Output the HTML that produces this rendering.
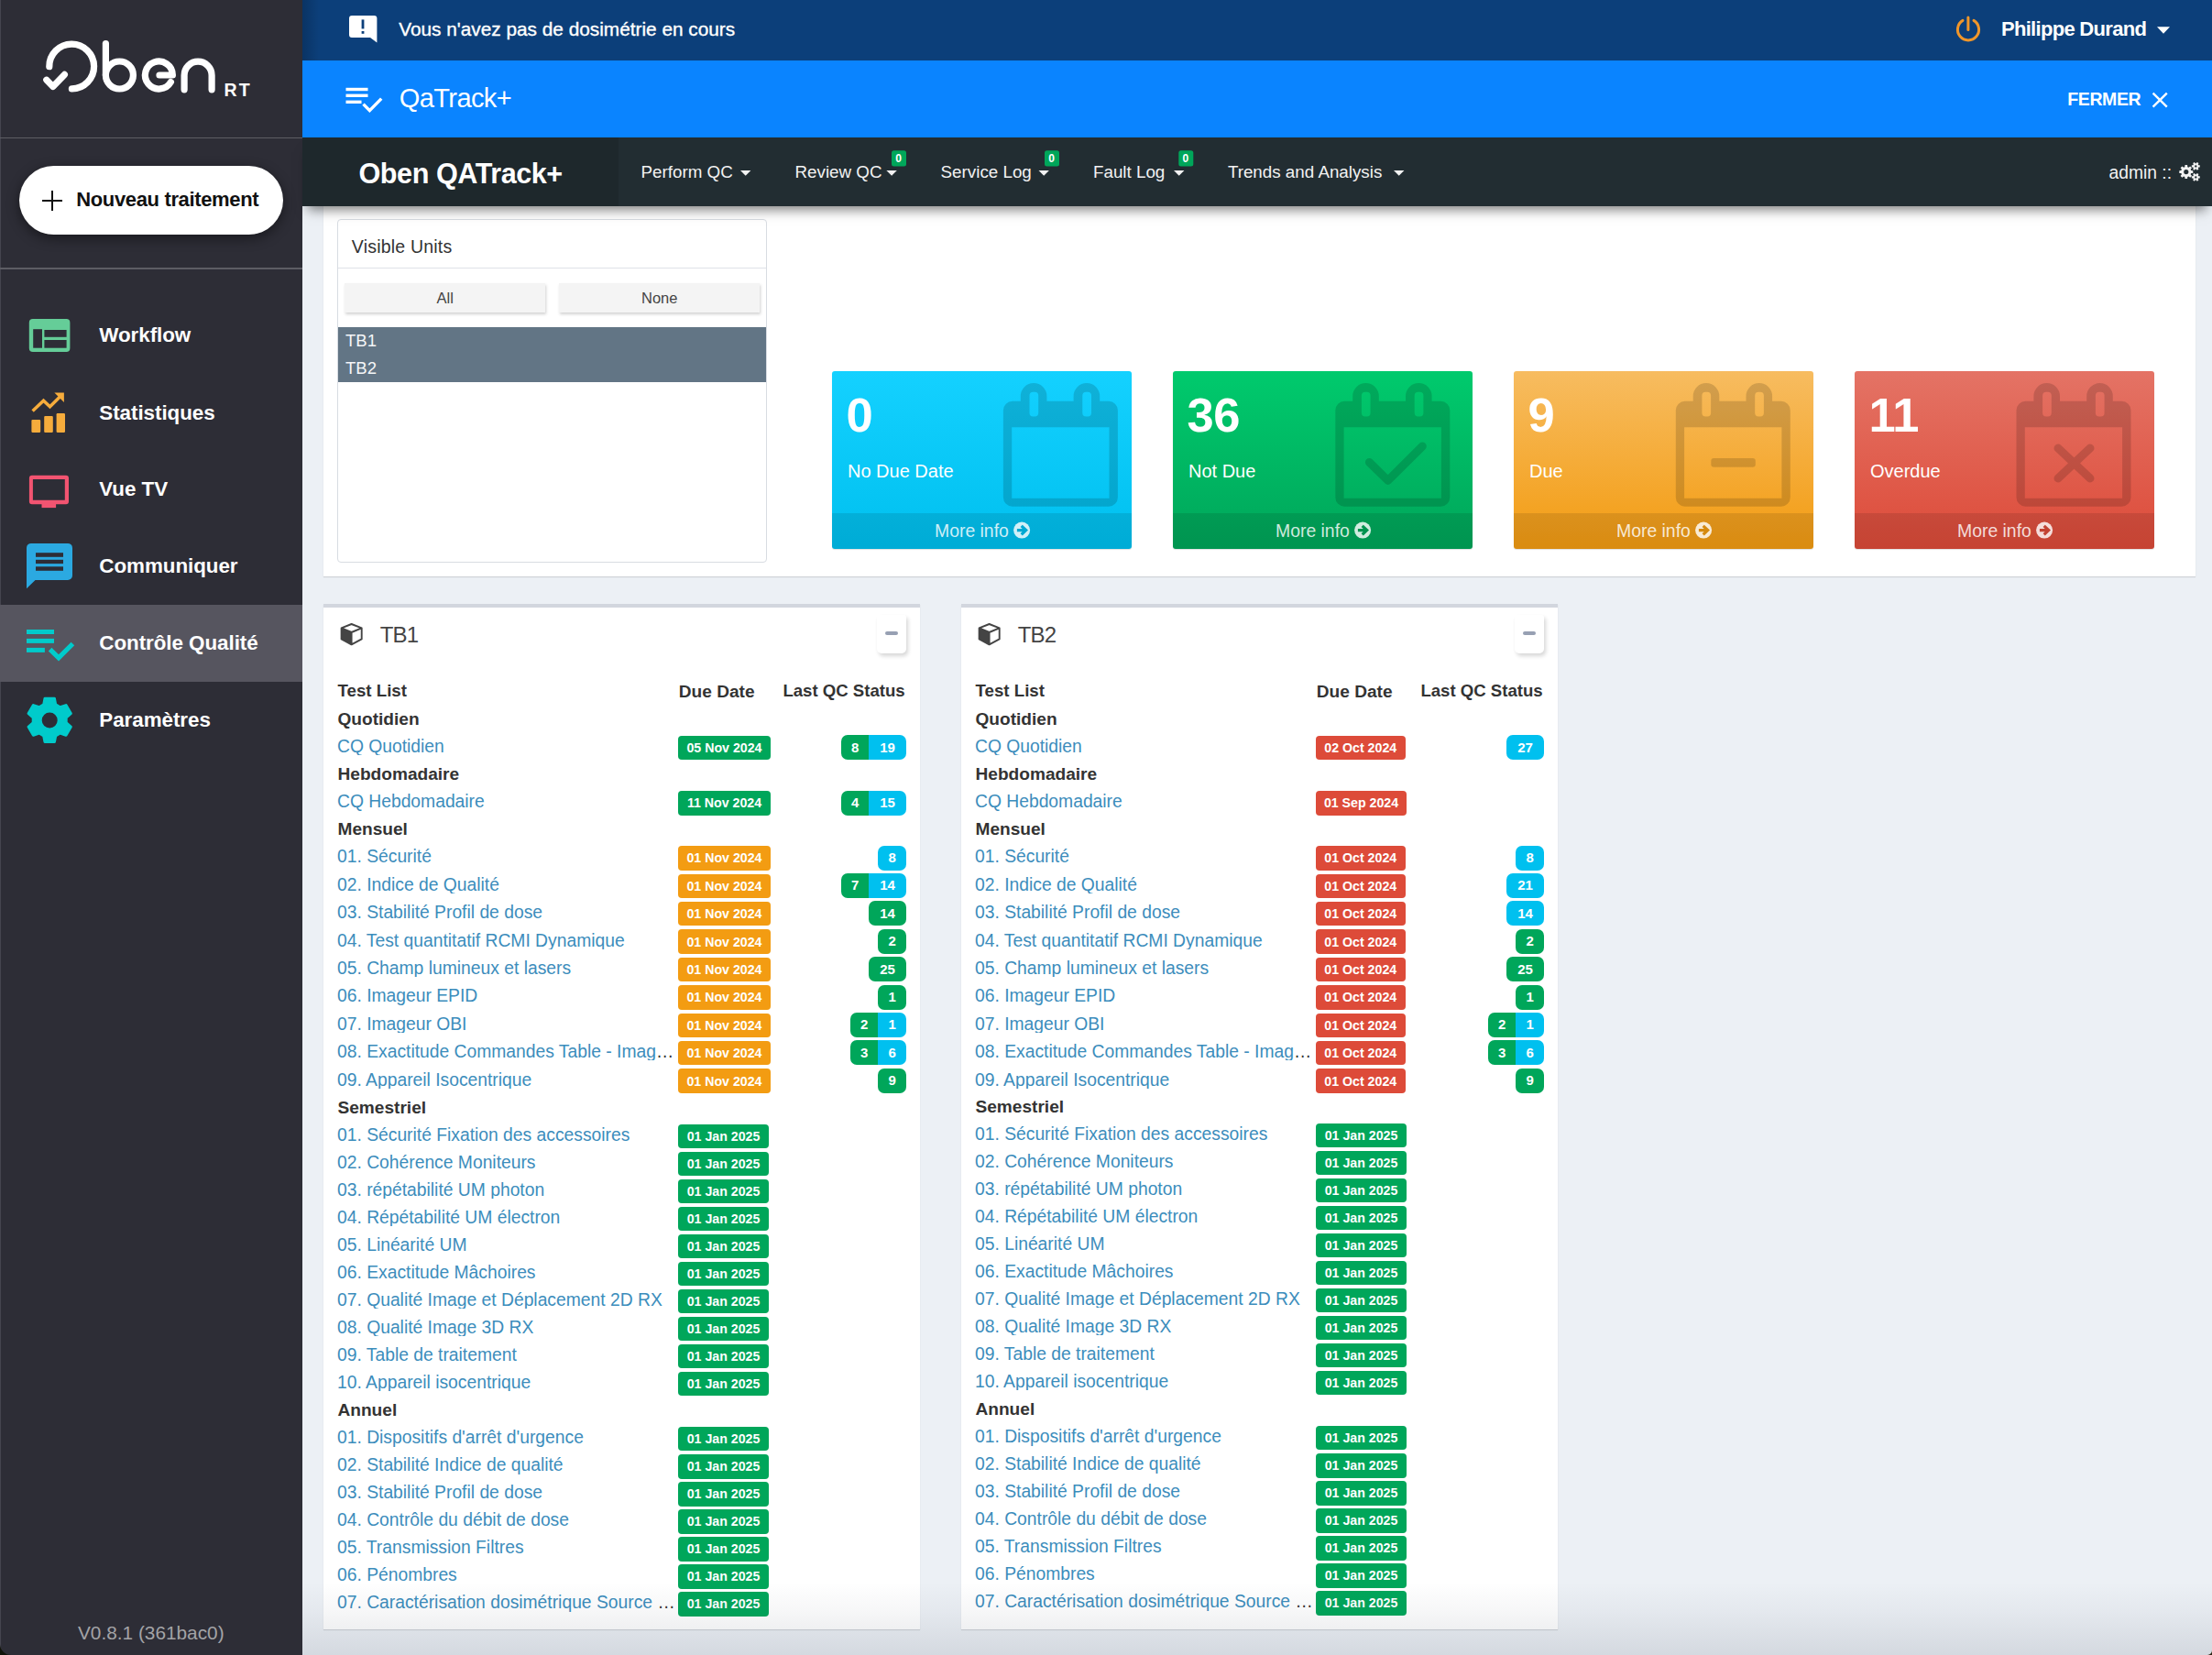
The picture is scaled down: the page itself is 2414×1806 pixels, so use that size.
<!DOCTYPE html><html><head><meta charset="utf-8"><title>Oben QATrack+</title><style>
*{box-sizing:border-box;margin:0;padding:0}
html,body{width:2414px;height:1806px;overflow:hidden}
body{position:relative;background:#ecf0f5;font-family:"Liberation Sans",sans-serif;}
.t{position:absolute;white-space:nowrap;}
.r{position:absolute;}
svg{position:absolute;overflow:visible}
</style></head><body><div class="r" style="left:0.00px;top:0.00px;width:330.00px;height:1806.00px;background:#2d2d36;"></div>
<div class="r" style="left:0.00px;top:0.00px;width:1.00px;height:1806.00px;background:#45454f;"></div>
<svg style="left:0;top:0" width="330" height="140" viewBox="0 0 330 140">
<g fill="none" stroke="#fff" stroke-width="7.2" stroke-linecap="round" stroke-linejoin="round">
<path d="M53.8 72.7 A24.4 24.4 0 1 1 78.4 96.9"/>
<path d="M50.8 87.2 L57.8 94.4 L70.4 81.4"/>
<path d="M115.4 47.6 V82"/>
<circle cx="130.4" cy="82" r="15"/>
<path d="M174 82 H188.4 A15 15 0 1 0 186.4 89.5"/>
<path d="M201.1 97.8 V82.2 A15 15 0 0 1 231.1 82.2 V97.8"/>
</g></svg>
<div class="t" style="left:244.50px;top:89.49px;font-size:19.5px;line-height:19.5px;font-weight:700;color:#fff;letter-spacing:2.2px;">RT</div>
<div class="r" style="left:0.00px;top:150.00px;width:330.00px;height:1.00px;background:#5d5d64;"></div>
<div class="r" style="left:0.00px;top:292.00px;width:330.00px;height:1.50px;background:#5d5d64;"></div>
<div class="r" style="left:20.50px;top:181.00px;width:288.50px;height:75.00px;background:#fff;border-radius:38px;box-shadow:0 4px 14px rgba(0,0,0,0.45);"></div>
<div class="r" style="left:46.00px;top:217.80px;width:22.00px;height:2.60px;background:#111;"></div>
<div class="r" style="left:55.70px;top:208.00px;width:2.60px;height:22.00px;background:#111;"></div>
<div class="t" style="left:83.20px;top:207.28px;font-size:22px;line-height:22px;font-weight:700;color:#111;letter-spacing:-0.35px;">Nouveau traitement</div>
<div class="r" style="left:0.00px;top:660.00px;width:330.00px;height:84.00px;background:#56555f;"></div>
<div class="t" style="left:108.30px;top:354.84px;font-size:22.4px;line-height:22.4px;font-weight:700;color:#fff;letter-spacing:-0.05px;">Workflow</div>
<div class="t" style="left:108.30px;top:439.54px;font-size:22.4px;line-height:22.4px;font-weight:700;color:#fff;letter-spacing:-0.05px;">Statistiques</div>
<div class="t" style="left:108.30px;top:522.64px;font-size:22.4px;line-height:22.4px;font-weight:700;color:#fff;letter-spacing:-0.05px;">Vue TV</div>
<div class="t" style="left:108.30px;top:607.34px;font-size:22.4px;line-height:22.4px;font-weight:700;color:#fff;letter-spacing:-0.05px;">Communiquer</div>
<div class="t" style="left:108.30px;top:690.74px;font-size:22.4px;line-height:22.4px;font-weight:700;color:#fff;letter-spacing:-0.05px;">Contrôle Qualité</div>
<div class="t" style="left:108.30px;top:775.44px;font-size:22.4px;line-height:22.4px;font-weight:700;color:#fff;letter-spacing:-0.05px;">Paramètres</div>
<svg style="left:0;top:0" width="100" height="820">
<rect x="31.8" y="348" width="44.6" height="36" rx="4" fill="#65cd98"/>
<rect x="36.2" y="359.2" width="9.8" height="20.5" fill="#2d2d36"/>
<rect x="48.4" y="360" width="24.2" height="7.8" fill="#2d2d36"/>
<rect x="48.4" y="371" width="24.2" height="8.7" fill="#2d2d36"/>
<g fill="#f6ac3c">
<rect x="34.4" y="457.9" width="9.8" height="14.1" rx="1.2"/>
<rect x="48.2" y="453.9" width="9.6" height="18.1" rx="1.2"/>
<rect x="61.6" y="451" width="9.4" height="21" rx="1.2"/>
</g>
<path d="M35.6 448.6 L47.5 437.2 L54.5 443.8 L65.4 433" fill="none" stroke="#f6ac3c" stroke-width="3.4" stroke-linejoin="miter"/>
<path d="M59.4 428.5 L69.9 428.5 L69.9 439 Z" fill="#f6ac3c"/>
<path d="M34.9 518.8 H72 A3 3 0 0 1 75 521.8 V547.3 A3 3 0 0 1 72 550.3 H34.9 A3 3 0 0 1 31.9 547.3 V521.8 A3 3 0 0 1 34.9 518.8 Z M35.9 523.1 V545.8 H70.8 V523.1 Z" fill="#f25471" fill-rule="evenodd"/>
<rect x="45.5" y="550" width="15.6" height="4.1" fill="#f25471"/>
<path d="M34 592.9 H74 A5 5 0 0 1 79 597.9 V628 A5 5 0 0 1 74 633 H38.5 L29 642.3 V597.9 A5 5 0 0 1 34 592.9 Z" fill="#2ba9e1"/>
<rect x="39" y="603.2" width="30" height="4.6" fill="#2d2d36"/>
<rect x="39" y="610.8" width="30" height="4.3" fill="#2d2d36"/>
<rect x="39" y="618.3" width="30" height="4.5" fill="#2d2d36"/>
<g fill="#00cbcb">
<rect x="29" y="687" width="30" height="5"/>
<rect x="29" y="696.9" width="30" height="5"/>
<rect x="29" y="706.9" width="19.9" height="5"/>
</g>
<path d="M54.6 708.6 L64 717.9 L79.4 702.5" fill="none" stroke="#00cbcb" stroke-width="5.2"/>
</svg>
<svg style="left:0;top:0" width="100" height="830"><path d="M47.68 768.91 L48.96 762.27 L59.44 762.27 L60.72 768.91 L65.65 771.76 L72.04 769.55 L77.28 778.62 L72.18 783.05 L72.18 788.75 L77.28 793.18 L72.04 802.25 L65.65 800.04 L60.72 802.89 L59.44 809.53 L48.96 809.53 L47.68 802.89 L42.75 800.04 L36.36 802.25 L31.12 793.18 L36.22 788.75 L36.22 783.05 L31.12 778.62 L36.36 769.55 L42.75 771.76 Z M64.20 785.90 A10 10 0 1 0 44.20 785.90 A10 10 0 1 0 64.20 785.90 Z" fill="#00cbcb" fill-rule="evenodd" stroke="#00cbcb" stroke-width="3" stroke-linejoin="round"/></svg>
<div class="t" style="left:85.00px;top:1771.89px;font-size:20.8px;line-height:20.8px;color:#a3a3a6;">V0.8.1 (361bac0)</div>
<div class="r" style="left:330.00px;top:0.00px;width:2084.00px;height:66.00px;background:#0c3f7a;"></div>
<div class="r" style="left:330.00px;top:0.00px;width:18.00px;height:66.00px;background:linear-gradient(90deg,rgba(0,0,0,0.18),rgba(0,0,0,0));"></div>
<svg style="left:0;top:0" width="420" height="60">
<path d="M384 17 H408.4 A3 3 0 0 1 411.4 20 V46.6 L404 41 H384 A3 3 0 0 1 381 38 V20 A3 3 0 0 1 384 17 Z" fill="#fff"/>
<rect x="394.6" y="21.4" width="2.8" height="10" fill="#0c3f7a"/>
<rect x="394.6" y="34" width="2.8" height="2.8" fill="#0c3f7a"/>
</svg>
<div class="t" style="left:435.20px;top:21.69px;font-size:20.8px;line-height:20.8px;color:#fff;letter-spacing:0px;-webkit-text-stroke:0.35px #fff;">Vous n'avez pas de dosimétrie en cours</div>
<svg style="left:0;top:0" width="2414" height="60">
<path d="M2142 22.4 A11.6 11.6 0 1 0 2154 22.4" fill="none" stroke="#f0962a" stroke-width="3" stroke-linecap="round"/>
<path d="M2147.9 19 V32.6" fill="none" stroke="#f0962a" stroke-width="3" stroke-linecap="round"/>
<path d="M2354 29.2 H2368 L2361 36.8 Z" fill="#fff"/>
</svg>
<div class="t" style="left:2184.00px;top:21.48px;font-size:22px;line-height:22px;font-weight:700;color:#fff;letter-spacing:-0.7px;">Philippe Durand</div>
<div class="r" style="left:330.00px;top:66.00px;width:2084.00px;height:84.00px;background:#0a84ff;"></div>
<svg style="left:0;top:0" width="2414" height="150">
<g fill="#fff">
<rect x="377.5" y="95.8" width="24" height="3.4"/>
<rect x="377.5" y="102.6" width="24" height="3.4"/>
<rect x="377.5" y="109.6" width="17" height="3.4"/>
</g>
<path d="M396.5 113.6 L403.4 120.6 L416.2 107.6" fill="none" stroke="#fff" stroke-width="3.4"/>
<path d="M2349.6 101.6 L2364.8 116.6 M2364.8 101.6 L2349.6 116.6" stroke="#fff" stroke-width="2.4"/>
</svg>
<div class="t" style="left:435.80px;top:93.45px;font-size:29px;line-height:29px;color:#fff;letter-spacing:-0.6px;">QaTrack+</div>
<div class="t" style="left:2256.30px;top:99.19px;font-size:19.5px;line-height:19.5px;font-weight:700;color:#fff;letter-spacing:-0.4px;">FERMER</div>
<div class="r" style="left:330.00px;top:150.00px;width:2084.00px;height:75.00px;background:#222d32;box-shadow:0 10px 12px -6px rgba(0,0,0,0.5);z-index:5"></div>
<div class="r" style="left:330.00px;top:150.00px;width:345.00px;height:75.00px;background:#1e282c;z-index:5"></div>
<div style="position:absolute;left:0;top:0;z-index:6">
<div class="t" style="left:391.50px;top:173.60px;font-size:30.6px;line-height:30.6px;font-weight:700;color:#fff;letter-spacing:-0.45px;">Oben QATrack+</div>
<div class="t" style="left:699.60px;top:179.29px;font-size:18.8px;line-height:18.8px;color:#f2f2f2;">Perform QC</div>
<div class="t" style="left:867.50px;top:179.29px;font-size:18.8px;line-height:18.8px;color:#f2f2f2;">Review QC</div>
<div class="t" style="left:1026.60px;top:179.29px;font-size:18.8px;line-height:18.8px;color:#f2f2f2;">Service Log</div>
<div class="t" style="left:1193.00px;top:179.29px;font-size:18.8px;line-height:18.8px;color:#f2f2f2;">Fault Log</div>
<div class="t" style="left:1339.90px;top:179.29px;font-size:18.8px;line-height:18.8px;color:#f2f2f2;">Trends and Analysis</div>
<svg style="left:0;top:0" width="2414" height="230"><path d="M808 186 H819.4 L813.7 191.8 Z" fill="#f2f2f2"/><path d="M967.4 186 H978.8 L973.1 191.8 Z" fill="#f2f2f2"/><rect x="973" y="164.2" width="16" height="17.4" rx="2.5" fill="#00a65a"/><path d="M1133.5 186 H1144.9 L1139.2 191.8 Z" fill="#f2f2f2"/><rect x="1140" y="164.2" width="16" height="17.4" rx="2.5" fill="#00a65a"/><path d="M1281 186 H1292.4 L1286.7 191.8 Z" fill="#f2f2f2"/><rect x="1286.3" y="164.2" width="16" height="17.4" rx="2.5" fill="#00a65a"/><path d="M1521 186 H1532.4 L1526.7 191.8 Z" fill="#f2f2f2"/></svg>
<div class="t" style="left:977.20px;top:167.44px;font-size:12px;line-height:12px;font-weight:700;color:#fff;">0</div>
<div class="t" style="left:1144.20px;top:167.44px;font-size:12px;line-height:12px;font-weight:700;color:#fff;">0</div>
<div class="t" style="left:1290.50px;top:167.44px;font-size:12px;line-height:12px;font-weight:700;color:#fff;">0</div>
<div class="t" style="left:2301.50px;top:178.66px;font-size:19.3px;line-height:19.3px;color:#f2f2f2;">admin ::</div>
<svg style="left:0;top:0" width="2414" height="230"><path d="M2391.20 186.12 L2393.29 186.29 L2393.29 188.91 L2391.20 189.08 L2390.66 190.37 L2392.02 191.97 L2390.17 193.82 L2388.57 192.46 L2387.28 193.00 L2387.11 195.09 L2384.49 195.09 L2384.32 193.00 L2383.03 192.46 L2381.43 193.82 L2379.58 191.97 L2380.94 190.37 L2380.40 189.08 L2378.31 188.91 L2378.31 186.29 L2380.40 186.12 L2380.94 184.83 L2379.58 183.23 L2381.43 181.38 L2383.03 182.74 L2384.32 182.20 L2384.49 180.11 L2387.11 180.11 L2387.28 182.20 L2388.57 182.74 L2390.17 181.38 L2392.02 183.23 L2390.66 184.83 Z M2388.40 187.60 A2.6 2.6 0 1 0 2383.20 187.60 A2.6 2.6 0 1 0 2388.40 187.60 Z" fill="#f2f2f2" fill-rule="evenodd"/><path d="M2399.30 180.28 L2400.78 180.35 L2400.78 182.45 L2399.30 182.52 L2398.77 183.44 L2399.45 184.75 L2397.63 185.80 L2396.83 184.56 L2395.77 184.56 L2394.97 185.80 L2393.15 184.75 L2393.83 183.44 L2393.30 182.52 L2391.82 182.45 L2391.82 180.35 L2393.30 180.28 L2393.83 179.36 L2393.15 178.05 L2394.97 177.00 L2395.77 178.24 L2396.83 178.24 L2397.63 177.00 L2399.45 178.05 L2398.77 179.36 Z M2397.50 181.40 A1.2 1.2 0 1 0 2395.10 181.40 A1.2 1.2 0 1 0 2397.50 181.40 Z" fill="#f2f2f2" fill-rule="evenodd"/><path d="M2399.30 192.28 L2400.78 192.35 L2400.78 194.45 L2399.30 194.52 L2398.77 195.44 L2399.45 196.75 L2397.63 197.80 L2396.83 196.56 L2395.77 196.56 L2394.97 197.80 L2393.15 196.75 L2393.83 195.44 L2393.30 194.52 L2391.82 194.45 L2391.82 192.35 L2393.30 192.28 L2393.83 191.36 L2393.15 190.05 L2394.97 189.00 L2395.77 190.24 L2396.83 190.24 L2397.63 189.00 L2399.45 190.05 L2398.77 191.36 Z M2397.50 193.40 A1.2 1.2 0 1 0 2395.10 193.40 A1.2 1.2 0 1 0 2397.50 193.40 Z" fill="#f2f2f2" fill-rule="evenodd"/></svg>
</div>
<div class="r" style="left:353.00px;top:215.00px;width:2043.00px;height:414.00px;background:#fff;box-shadow:0 1px 1px rgba(0,0,0,0.12);"></div>
<div class="r" style="left:368.00px;top:239.00px;width:468.50px;height:374.50px;background:#fff;border:1px solid #d8dce2;border-radius:4px;"></div>
<div class="r" style="left:369.00px;top:292.00px;width:466.50px;height:1.00px;background:#dfe2e8;"></div>
<div class="t" style="left:383.80px;top:260.29px;font-size:19.5px;line-height:19.5px;color:#333;letter-spacing:0.2px;">Visible Units</div>
<div class="r" style="left:376.30px;top:309.20px;width:218.70px;height:31.80px;background:#f4f4f4;box-shadow:1px 2px 3px rgba(0,0,0,0.18);"></div>
<div class="r" style="left:610.20px;top:309.30px;width:218.80px;height:31.90px;background:#f4f4f4;box-shadow:1px 2px 3px rgba(0,0,0,0.18);"></div>
<div class="t" style="left:476.50px;top:316.63px;font-size:16.5px;line-height:16.5px;color:#444;">All</div>
<div class="t" style="left:700.00px;top:316.63px;font-size:16.5px;line-height:16.5px;color:#444;">None</div>
<div class="r" style="left:369.00px;top:357.00px;width:466.70px;height:59.60px;background:#627585;"></div>
<div class="t" style="left:377.00px;top:362.84px;font-size:18.5px;line-height:18.5px;color:#f4f6f8;">TB1</div>
<div class="t" style="left:377.00px;top:392.84px;font-size:18.5px;line-height:18.5px;color:#f4f6f8;">TB2</div>
<div class="r" style="left:908.00px;top:405.00px;width:327.00px;height:194.00px;background:linear-gradient(to top,#00c0ef 0%,#14d1ff 100%);border-radius:3px;overflow:hidden;box-shadow:0 1px 1px rgba(0,0,0,0.12);"></div>
<div class="r" style="left:908.00px;top:560.00px;width:327.00px;height:39.00px;background:rgba(0,0,0,0.1);border-radius:0 0 3px 3px;"></div>
<div class="t" style="left:923.50px;top:427.26px;font-size:52.5px;line-height:52.5px;font-weight:700;color:#fff;letter-spacing:-0.5px;">0</div>
<div class="t" style="left:925.00px;top:504.07px;font-size:20px;line-height:20px;color:#fff;">No Due Date</div>
<svg style="left:0;top:0" width="2414" height="620"><path d="M1104.9 437.8 H1209.9 A10 10 0 0 1 1219.9 447.8 V542.8 A10 10 0 0 1 1209.9 552.8 H1104.9 A10 10 0 0 1 1094.9 542.8 V447.8 A10 10 0 0 1 1104.9 437.8 Z M1104.2 466.3 V543.8 H1210.5 V466.3 Z M1113.8000000000002 437.8 V432.4 A14.3 14.3 0 0 1 1142.4 432.4 V437.8 Z M1123.5000000000002 431.8 A4 4 0 0 1 1127.5000000000002 427.8 H1129.2000000000003 A4 4 0 0 1 1133.2000000000003 431.8 V450.6 A4 4 0 0 1 1129.2000000000003 454.6 H1127.5000000000002 A4 4 0 0 1 1123.5000000000002 450.6 Z M1171.6000000000001 437.8 V432.4 A14.3 14.3 0 0 1 1200.2 432.4 V437.8 Z M1181.3000000000002 431.8 A4 4 0 0 1 1185.3000000000002 427.8 H1187.0000000000002 A4 4 0 0 1 1191.0000000000002 431.8 V450.6 A4 4 0 0 1 1187.0000000000002 454.6 H1185.3000000000002 A4 4 0 0 1 1181.3000000000002 450.6 Z " fill="rgba(0,0,0,0.15)" fill-rule="evenodd"/></svg>
<div class="t" style="left:1020.00px;top:570.38px;font-size:19.4px;line-height:19.4px;color:rgba(255,255,255,0.82);">More info</div>
<svg style="left:0;top:0" width="2414" height="620"><circle cx="1115.1" cy="578.6" r="9" fill="rgba(255,255,255,0.82)"/><path d="M1109.8999999999999 578.6 H1118.3 M1114.6999999999998 573.8 L1119.6999999999998 578.6 L1114.6999999999998 583.4" fill="none" stroke="#00a8d2" stroke-width="3.2" stroke-linecap="butt" stroke-linejoin="miter"/></svg>
<div class="r" style="left:1280.00px;top:405.00px;width:327.00px;height:194.00px;background:linear-gradient(to top,#00a65a 0%,#00ca6d 100%);border-radius:3px;overflow:hidden;box-shadow:0 1px 1px rgba(0,0,0,0.12);"></div>
<div class="r" style="left:1280.00px;top:560.00px;width:327.00px;height:39.00px;background:rgba(0,0,0,0.1);border-radius:0 0 3px 3px;"></div>
<div class="t" style="left:1295.50px;top:427.26px;font-size:52.5px;line-height:52.5px;font-weight:700;color:#fff;letter-spacing:-0.5px;">36</div>
<div class="t" style="left:1297.00px;top:504.07px;font-size:20px;line-height:20px;color:#fff;">Not Due</div>
<svg style="left:0;top:0" width="2414" height="620"><path d="M1467.3 437.8 H1572.3 A10 10 0 0 1 1582.3 447.8 V542.8 A10 10 0 0 1 1572.3 552.8 H1467.3 A10 10 0 0 1 1457.3 542.8 V447.8 A10 10 0 0 1 1467.3 437.8 Z M1466.6 466.3 V543.8 H1572.8999999999999 V466.3 Z M1476.2 437.8 V432.4 A14.3 14.3 0 0 1 1504.8 432.4 V437.8 Z M1485.9 431.8 A4 4 0 0 1 1489.9 427.8 H1491.6000000000001 A4 4 0 0 1 1495.6000000000001 431.8 V450.6 A4 4 0 0 1 1491.6000000000001 454.6 H1489.9 A4 4 0 0 1 1485.9 450.6 Z M1534.0 437.8 V432.4 A14.3 14.3 0 0 1 1562.6 432.4 V437.8 Z M1543.7 431.8 A4 4 0 0 1 1547.7 427.8 H1549.4 A4 4 0 0 1 1553.4 431.8 V450.6 A4 4 0 0 1 1549.4 454.6 H1547.7 A4 4 0 0 1 1543.7 450.6 Z " fill="rgba(0,0,0,0.15)" fill-rule="evenodd"/><path d="M1494.3999999999999 504.5 L1514.7 524.4 L1552.3 487" fill="none" stroke="rgba(0,0,0,0.15)" stroke-width="9" stroke-linecap="round" stroke-linejoin="round"/></svg>
<div class="t" style="left:1392.00px;top:570.38px;font-size:19.4px;line-height:19.4px;color:rgba(255,255,255,0.82);">More info</div>
<svg style="left:0;top:0" width="2414" height="620"><circle cx="1487.1" cy="578.6" r="9" fill="rgba(255,255,255,0.82)"/><path d="M1481.8999999999999 578.6 H1490.3 M1486.6999999999998 573.8 L1491.6999999999998 578.6 L1486.6999999999998 583.4" fill="none" stroke="#00924f" stroke-width="3.2" stroke-linecap="butt" stroke-linejoin="miter"/></svg>
<div class="r" style="left:1652.00px;top:405.00px;width:327.00px;height:194.00px;background:linear-gradient(to top,#f39c12 0%,#f7bc60 100%);border-radius:3px;overflow:hidden;box-shadow:0 1px 1px rgba(0,0,0,0.12);"></div>
<div class="r" style="left:1652.00px;top:560.00px;width:327.00px;height:39.00px;background:rgba(0,0,0,0.1);border-radius:0 0 3px 3px;"></div>
<div class="t" style="left:1667.50px;top:427.26px;font-size:52.5px;line-height:52.5px;font-weight:700;color:#fff;letter-spacing:-0.5px;">9</div>
<div class="t" style="left:1669.00px;top:504.07px;font-size:20px;line-height:20px;color:#fff;">Due</div>
<svg style="left:0;top:0" width="2414" height="620"><path d="M1838.8 437.8 H1943.8 A10 10 0 0 1 1953.8 447.8 V542.8 A10 10 0 0 1 1943.8 552.8 H1838.8 A10 10 0 0 1 1828.8 542.8 V447.8 A10 10 0 0 1 1838.8 437.8 Z M1838.1 466.3 V543.8 H1944.3999999999999 V466.3 Z M1847.7 437.8 V432.4 A14.3 14.3 0 0 1 1876.3 432.4 V437.8 Z M1857.4 431.8 A4 4 0 0 1 1861.4 427.8 H1863.1000000000001 A4 4 0 0 1 1867.1000000000001 431.8 V450.6 A4 4 0 0 1 1863.1000000000001 454.6 H1861.4 A4 4 0 0 1 1857.4 450.6 Z M1905.5 437.8 V432.4 A14.3 14.3 0 0 1 1934.1 432.4 V437.8 Z M1915.2 431.8 A4 4 0 0 1 1919.2 427.8 H1920.9 A4 4 0 0 1 1924.9 431.8 V450.6 A4 4 0 0 1 1920.9 454.6 H1919.2 A4 4 0 0 1 1915.2 450.6 Z " fill="rgba(0,0,0,0.15)" fill-rule="evenodd"/><rect x="1867.3" y="500.1" width="48.5" height="9.7" rx="3" fill="rgba(0,0,0,0.15)"/></svg>
<div class="t" style="left:1764.00px;top:570.38px;font-size:19.4px;line-height:19.4px;color:rgba(255,255,255,0.82);">More info</div>
<svg style="left:0;top:0" width="2414" height="620"><circle cx="1859.1" cy="578.6" r="9" fill="rgba(255,255,255,0.82)"/><path d="M1853.8999999999999 578.6 H1862.3 M1858.6999999999998 573.8 L1863.6999999999998 578.6 L1858.6999999999998 583.4" fill="none" stroke="#d5890f" stroke-width="3.2" stroke-linecap="butt" stroke-linejoin="miter"/></svg>
<div class="r" style="left:2024.00px;top:405.00px;width:327.00px;height:194.00px;background:linear-gradient(to top,#dd4b39 0%,#e47365 100%);border-radius:3px;overflow:hidden;box-shadow:0 1px 1px rgba(0,0,0,0.12);"></div>
<div class="r" style="left:2024.00px;top:560.00px;width:327.00px;height:39.00px;background:rgba(0,0,0,0.1);border-radius:0 0 3px 3px;"></div>
<div class="t" style="left:2039.50px;top:427.26px;font-size:52.5px;line-height:52.5px;font-weight:700;color:#fff;letter-spacing:-0.5px;">11</div>
<div class="t" style="left:2041.00px;top:504.07px;font-size:20px;line-height:20px;color:#fff;">Overdue</div>
<svg style="left:0;top:0" width="2414" height="620"><path d="M2210.5 437.8 H2315.5 A10 10 0 0 1 2325.5 447.8 V542.8 A10 10 0 0 1 2315.5 552.8 H2210.5 A10 10 0 0 1 2200.5 542.8 V447.8 A10 10 0 0 1 2210.5 437.8 Z M2209.8 466.3 V543.8 H2316.1 V466.3 Z M2219.4 437.8 V432.4 A14.3 14.3 0 0 1 2248.0 432.4 V437.8 Z M2229.1 431.8 A4 4 0 0 1 2233.1 427.8 H2234.8 A4 4 0 0 1 2238.8 431.8 V450.6 A4 4 0 0 1 2234.8 454.6 H2233.1 A4 4 0 0 1 2229.1 450.6 Z M2277.2 437.8 V432.4 A14.3 14.3 0 0 1 2305.7999999999997 432.4 V437.8 Z M2286.8999999999996 431.8 A4 4 0 0 1 2290.8999999999996 427.8 H2292.6 A4 4 0 0 1 2296.6 431.8 V450.6 A4 4 0 0 1 2292.6 454.6 H2290.8999999999996 A4 4 0 0 1 2286.8999999999996 450.6 Z " fill="rgba(0,0,0,0.15)" fill-rule="evenodd"/><path d="M2246.0 489 L2281.0 522 M2281.0 489 L2246.0 522" fill="none" stroke="rgba(0,0,0,0.15)" stroke-width="9" stroke-linecap="round"/></svg>
<div class="t" style="left:2136.00px;top:570.38px;font-size:19.4px;line-height:19.4px;color:rgba(255,255,255,0.82);">More info</div>
<svg style="left:0;top:0" width="2414" height="620"><circle cx="2231.1" cy="578.6" r="9" fill="rgba(255,255,255,0.82)"/><path d="M2225.9 578.6 H2234.2999999999997 M2230.7 573.8 L2235.7 578.6 L2230.7 583.4" fill="none" stroke="#c24232" stroke-width="3.2" stroke-linecap="butt" stroke-linejoin="miter"/></svg>
<div class="r" style="left:353.00px;top:659.00px;width:651.00px;height:1119.00px;background:#fff;border-top:4px solid #d2d6de;box-shadow:0 1px 1px rgba(0,0,0,0.12);"></div><svg style="left:0;top:0" width="2414" height="720"><g transform="translate(370.8,679.8)"><path d="M1.8 17.6 L12.8 23.6 V10.2 L1.8 5.6 Z" fill="#444"/><path d="M12.8 1.2 L23.9 5.6 V17.6 L12.8 23.6 L1.8 17.6 V5.6 Z M1.8 5.6 L12.8 10.2 L23.9 5.6 M12.8 10.2 V23.6" fill="none" stroke="#444" stroke-width="1.9" stroke-linejoin="round"/></g></svg><div class="t" style="left:414.80px;top:680.68px;font-size:24px;line-height:24px;color:#444;letter-spacing:-0.9px;">TB1</div><div class="r" style="left:957.00px;top:671.00px;width:32.00px;height:41.70px;background:#fff;border-radius:3px 3px 5px 5px;box-shadow:2px 3px 4px rgba(0,0,0,0.16);"></div><div class="r" style="left:965.50px;top:689.00px;width:14.50px;height:4.00px;background:#97a0b3;border-radius:2px;"></div><div class="t" style="left:368.50px;top:745.17px;font-size:18.7px;line-height:18.7px;font-weight:700;color:#333;">Test List</div><div class="t" style="left:740.80px;top:744.83px;font-size:19.1px;line-height:19.1px;font-weight:700;color:#333;">Due Date</div><div class="t" style="left:854.40px;top:745.26px;font-size:18.6px;line-height:18.6px;font-weight:700;color:#333;">Last QC Status</div><div class="t" style="left:368.50px;top:774.83px;font-size:19.1px;line-height:19.1px;font-weight:700;color:#333;">Quotidien</div><div class="t" style="left:368.00px;top:804.86px;font-size:19.3px;line-height:19.3px;color:#333;width:369px;overflow:hidden;text-overflow:ellipsis;"><span style="color:#3c8dbc">CQ Quotidien</span></div><div class="r" style="left:740.00px;top:802.70px;width:101.00px;height:26.40px;background:#00a65a;border-radius:4px;"></div><div class="t" style="left:740.00px;top:808.88px;font-size:14.2px;line-height:14.2px;font-weight:700;color:#fff;width:101px;text-align:center;">05 Nov 2024</div><div class="r" style="left:917.80px;top:802.00px;width:30.50px;height:27.20px;background:#00a65a;border-radius:7px 0 0 7px;"></div><div class="t" style="left:917.80px;top:807.50px;font-size:15px;line-height:15px;font-weight:700;color:#fff;width:30.5px;text-align:center;">8</div><div class="r" style="left:948.30px;top:802.00px;width:40.50px;height:27.20px;background:#00c0ef;border-radius:0 7px 7px 0;"></div><div class="t" style="left:948.30px;top:807.50px;font-size:15px;line-height:15px;font-weight:700;color:#fff;width:40.5px;text-align:center;">19</div><div class="t" style="left:368.50px;top:835.03px;font-size:19.1px;line-height:19.1px;font-weight:700;color:#333;">Hebdomadaire</div><div class="t" style="left:368.00px;top:865.46px;font-size:19.3px;line-height:19.3px;color:#333;width:369px;overflow:hidden;text-overflow:ellipsis;"><span style="color:#3c8dbc">CQ Hebdomadaire</span></div><div class="r" style="left:740.00px;top:863.30px;width:101.00px;height:26.40px;background:#00a65a;border-radius:4px;"></div><div class="t" style="left:740.00px;top:869.48px;font-size:14.2px;line-height:14.2px;font-weight:700;color:#fff;width:101px;text-align:center;">11 Nov 2024</div><div class="r" style="left:917.80px;top:862.60px;width:30.50px;height:27.20px;background:#00a65a;border-radius:7px 0 0 7px;"></div><div class="t" style="left:917.80px;top:868.10px;font-size:15px;line-height:15px;font-weight:700;color:#fff;width:30.5px;text-align:center;">4</div><div class="r" style="left:948.30px;top:862.60px;width:40.50px;height:27.20px;background:#00c0ef;border-radius:0 7px 7px 0;"></div><div class="t" style="left:948.30px;top:868.10px;font-size:15px;line-height:15px;font-weight:700;color:#fff;width:40.5px;text-align:center;">15</div><div class="t" style="left:368.50px;top:895.23px;font-size:19.1px;line-height:19.1px;font-weight:700;color:#333;">Mensuel</div><div class="t" style="left:368.00px;top:925.36px;font-size:19.3px;line-height:19.3px;color:#333;width:369px;overflow:hidden;text-overflow:ellipsis;"><span style="color:#3c8dbc">01. Sécurité</span></div><div class="r" style="left:740.00px;top:923.20px;width:101.00px;height:26.40px;background:#f39c12;border-radius:4px;"></div><div class="t" style="left:740.00px;top:929.38px;font-size:14.2px;line-height:14.2px;font-weight:700;color:#fff;width:101px;text-align:center;">01 Nov 2024</div><div class="r" style="left:958.30px;top:922.50px;width:30.50px;height:27.20px;background:#00c0ef;border-radius:7px;"></div><div class="t" style="left:958.30px;top:928.00px;font-size:15px;line-height:15px;font-weight:700;color:#fff;width:30.5px;text-align:center;">8</div><div class="t" style="left:368.00px;top:955.76px;font-size:19.3px;line-height:19.3px;color:#333;width:369px;overflow:hidden;text-overflow:ellipsis;"><span style="color:#3c8dbc">02. Indice de Qualité</span></div><div class="r" style="left:740.00px;top:953.60px;width:101.00px;height:26.40px;background:#f39c12;border-radius:4px;"></div><div class="t" style="left:740.00px;top:959.78px;font-size:14.2px;line-height:14.2px;font-weight:700;color:#fff;width:101px;text-align:center;">01 Nov 2024</div><div class="r" style="left:917.80px;top:952.90px;width:30.50px;height:27.20px;background:#00a65a;border-radius:7px 0 0 7px;"></div><div class="t" style="left:917.80px;top:958.40px;font-size:15px;line-height:15px;font-weight:700;color:#fff;width:30.5px;text-align:center;">7</div><div class="r" style="left:948.30px;top:952.90px;width:40.50px;height:27.20px;background:#00c0ef;border-radius:0 7px 7px 0;"></div><div class="t" style="left:948.30px;top:958.40px;font-size:15px;line-height:15px;font-weight:700;color:#fff;width:40.5px;text-align:center;">14</div><div class="t" style="left:368.00px;top:986.16px;font-size:19.3px;line-height:19.3px;color:#333;width:369px;overflow:hidden;text-overflow:ellipsis;"><span style="color:#3c8dbc">03. Stabilité Profil de dose</span></div><div class="r" style="left:740.00px;top:984.00px;width:101.00px;height:26.40px;background:#f39c12;border-radius:4px;"></div><div class="t" style="left:740.00px;top:990.18px;font-size:14.2px;line-height:14.2px;font-weight:700;color:#fff;width:101px;text-align:center;">01 Nov 2024</div><div class="r" style="left:948.30px;top:983.30px;width:40.50px;height:27.20px;background:#00a65a;border-radius:7px;"></div><div class="t" style="left:948.30px;top:988.80px;font-size:15px;line-height:15px;font-weight:700;color:#fff;width:40.5px;text-align:center;">14</div><div class="t" style="left:368.00px;top:1016.56px;font-size:19.3px;line-height:19.3px;color:#333;width:369px;overflow:hidden;text-overflow:ellipsis;"><span style="color:#3c8dbc">04. Test quantitatif RCMI Dynamique</span></div><div class="r" style="left:740.00px;top:1014.40px;width:101.00px;height:26.40px;background:#f39c12;border-radius:4px;"></div><div class="t" style="left:740.00px;top:1020.58px;font-size:14.2px;line-height:14.2px;font-weight:700;color:#fff;width:101px;text-align:center;">01 Nov 2024</div><div class="r" style="left:958.30px;top:1013.70px;width:30.50px;height:27.20px;background:#00a65a;border-radius:7px;"></div><div class="t" style="left:958.30px;top:1019.20px;font-size:15px;line-height:15px;font-weight:700;color:#fff;width:30.5px;text-align:center;">2</div><div class="t" style="left:368.00px;top:1046.96px;font-size:19.3px;line-height:19.3px;color:#333;width:369px;overflow:hidden;text-overflow:ellipsis;"><span style="color:#3c8dbc">05. Champ lumineux et lasers</span></div><div class="r" style="left:740.00px;top:1044.80px;width:101.00px;height:26.40px;background:#f39c12;border-radius:4px;"></div><div class="t" style="left:740.00px;top:1050.98px;font-size:14.2px;line-height:14.2px;font-weight:700;color:#fff;width:101px;text-align:center;">01 Nov 2024</div><div class="r" style="left:948.30px;top:1044.10px;width:40.50px;height:27.20px;background:#00a65a;border-radius:7px;"></div><div class="t" style="left:948.30px;top:1049.60px;font-size:15px;line-height:15px;font-weight:700;color:#fff;width:40.5px;text-align:center;">25</div><div class="t" style="left:368.00px;top:1077.36px;font-size:19.3px;line-height:19.3px;color:#333;width:369px;overflow:hidden;text-overflow:ellipsis;"><span style="color:#3c8dbc">06. Imageur EPID</span></div><div class="r" style="left:740.00px;top:1075.20px;width:101.00px;height:26.40px;background:#f39c12;border-radius:4px;"></div><div class="t" style="left:740.00px;top:1081.38px;font-size:14.2px;line-height:14.2px;font-weight:700;color:#fff;width:101px;text-align:center;">01 Nov 2024</div><div class="r" style="left:958.30px;top:1074.50px;width:30.50px;height:27.20px;background:#00a65a;border-radius:7px;"></div><div class="t" style="left:958.30px;top:1080.00px;font-size:15px;line-height:15px;font-weight:700;color:#fff;width:30.5px;text-align:center;">1</div><div class="t" style="left:368.00px;top:1107.76px;font-size:19.3px;line-height:19.3px;color:#333;width:369px;overflow:hidden;text-overflow:ellipsis;"><span style="color:#3c8dbc">07. Imageur OBI</span></div><div class="r" style="left:740.00px;top:1105.60px;width:101.00px;height:26.40px;background:#f39c12;border-radius:4px;"></div><div class="t" style="left:740.00px;top:1111.78px;font-size:14.2px;line-height:14.2px;font-weight:700;color:#fff;width:101px;text-align:center;">01 Nov 2024</div><div class="r" style="left:927.80px;top:1104.90px;width:30.50px;height:27.20px;background:#00a65a;border-radius:7px 0 0 7px;"></div><div class="t" style="left:927.80px;top:1110.40px;font-size:15px;line-height:15px;font-weight:700;color:#fff;width:30.5px;text-align:center;">2</div><div class="r" style="left:958.30px;top:1104.90px;width:30.50px;height:27.20px;background:#00c0ef;border-radius:0 7px 7px 0;"></div><div class="t" style="left:958.30px;top:1110.40px;font-size:15px;line-height:15px;font-weight:700;color:#fff;width:30.5px;text-align:center;">1</div><div class="t" style="left:368.00px;top:1138.16px;font-size:19.3px;line-height:19.3px;color:#333;width:369px;overflow:hidden;text-overflow:ellipsis;"><span style="color:#3c8dbc">08. Exactitude Commandes Table - Imagerie</span></div><div class="r" style="left:740.00px;top:1136.00px;width:101.00px;height:26.40px;background:#f39c12;border-radius:4px;"></div><div class="t" style="left:740.00px;top:1142.18px;font-size:14.2px;line-height:14.2px;font-weight:700;color:#fff;width:101px;text-align:center;">01 Nov 2024</div><div class="r" style="left:927.80px;top:1135.30px;width:30.50px;height:27.20px;background:#00a65a;border-radius:7px 0 0 7px;"></div><div class="t" style="left:927.80px;top:1140.80px;font-size:15px;line-height:15px;font-weight:700;color:#fff;width:30.5px;text-align:center;">3</div><div class="r" style="left:958.30px;top:1135.30px;width:30.50px;height:27.20px;background:#00c0ef;border-radius:0 7px 7px 0;"></div><div class="t" style="left:958.30px;top:1140.80px;font-size:15px;line-height:15px;font-weight:700;color:#fff;width:30.5px;text-align:center;">6</div><div class="t" style="left:368.00px;top:1168.56px;font-size:19.3px;line-height:19.3px;color:#333;width:369px;overflow:hidden;text-overflow:ellipsis;"><span style="color:#3c8dbc">09. Appareil Isocentrique</span></div><div class="r" style="left:740.00px;top:1166.40px;width:101.00px;height:26.40px;background:#f39c12;border-radius:4px;"></div><div class="t" style="left:740.00px;top:1172.58px;font-size:14.2px;line-height:14.2px;font-weight:700;color:#fff;width:101px;text-align:center;">01 Nov 2024</div><div class="r" style="left:958.30px;top:1165.70px;width:30.50px;height:27.20px;background:#00a65a;border-radius:7px;"></div><div class="t" style="left:958.30px;top:1171.20px;font-size:15px;line-height:15px;font-weight:700;color:#fff;width:30.5px;text-align:center;">9</div><div class="t" style="left:368.50px;top:1198.73px;font-size:19.1px;line-height:19.1px;font-weight:700;color:#333;">Semestriel</div><div class="t" style="left:368.00px;top:1229.16px;font-size:19.3px;line-height:19.3px;color:#333;width:369px;overflow:hidden;text-overflow:ellipsis;"><span style="color:#3c8dbc">01. Sécurité Fixation des accessoires</span></div><div class="r" style="left:740.00px;top:1227.00px;width:99.00px;height:26.40px;background:#00a65a;border-radius:4px;"></div><div class="t" style="left:740.00px;top:1233.18px;font-size:14.2px;line-height:14.2px;font-weight:700;color:#fff;width:99px;text-align:center;">01 Jan 2025</div><div class="t" style="left:368.00px;top:1259.16px;font-size:19.3px;line-height:19.3px;color:#333;width:369px;overflow:hidden;text-overflow:ellipsis;"><span style="color:#3c8dbc">02. Cohérence Moniteurs</span></div><div class="r" style="left:740.00px;top:1257.00px;width:99.00px;height:26.40px;background:#00a65a;border-radius:4px;"></div><div class="t" style="left:740.00px;top:1263.18px;font-size:14.2px;line-height:14.2px;font-weight:700;color:#fff;width:99px;text-align:center;">01 Jan 2025</div><div class="t" style="left:368.00px;top:1289.16px;font-size:19.3px;line-height:19.3px;color:#333;width:369px;overflow:hidden;text-overflow:ellipsis;"><span style="color:#3c8dbc">03. répétabilité UM photon</span></div><div class="r" style="left:740.00px;top:1287.00px;width:99.00px;height:26.40px;background:#00a65a;border-radius:4px;"></div><div class="t" style="left:740.00px;top:1293.18px;font-size:14.2px;line-height:14.2px;font-weight:700;color:#fff;width:99px;text-align:center;">01 Jan 2025</div><div class="t" style="left:368.00px;top:1319.16px;font-size:19.3px;line-height:19.3px;color:#333;width:369px;overflow:hidden;text-overflow:ellipsis;"><span style="color:#3c8dbc">04. Répétabilité UM électron</span></div><div class="r" style="left:740.00px;top:1317.00px;width:99.00px;height:26.40px;background:#00a65a;border-radius:4px;"></div><div class="t" style="left:740.00px;top:1323.18px;font-size:14.2px;line-height:14.2px;font-weight:700;color:#fff;width:99px;text-align:center;">01 Jan 2025</div><div class="t" style="left:368.00px;top:1349.16px;font-size:19.3px;line-height:19.3px;color:#333;width:369px;overflow:hidden;text-overflow:ellipsis;"><span style="color:#3c8dbc">05. Linéarité UM</span></div><div class="r" style="left:740.00px;top:1347.00px;width:99.00px;height:26.40px;background:#00a65a;border-radius:4px;"></div><div class="t" style="left:740.00px;top:1353.18px;font-size:14.2px;line-height:14.2px;font-weight:700;color:#fff;width:99px;text-align:center;">01 Jan 2025</div><div class="t" style="left:368.00px;top:1379.16px;font-size:19.3px;line-height:19.3px;color:#333;width:369px;overflow:hidden;text-overflow:ellipsis;"><span style="color:#3c8dbc">06. Exactitude Mâchoires</span></div><div class="r" style="left:740.00px;top:1377.00px;width:99.00px;height:26.40px;background:#00a65a;border-radius:4px;"></div><div class="t" style="left:740.00px;top:1383.18px;font-size:14.2px;line-height:14.2px;font-weight:700;color:#fff;width:99px;text-align:center;">01 Jan 2025</div><div class="t" style="left:368.00px;top:1409.16px;font-size:19.3px;line-height:19.3px;color:#333;width:369px;overflow:hidden;text-overflow:ellipsis;"><span style="color:#3c8dbc">07. Qualité Image et Déplacement 2D RX</span></div><div class="r" style="left:740.00px;top:1407.00px;width:99.00px;height:26.40px;background:#00a65a;border-radius:4px;"></div><div class="t" style="left:740.00px;top:1413.18px;font-size:14.2px;line-height:14.2px;font-weight:700;color:#fff;width:99px;text-align:center;">01 Jan 2025</div><div class="t" style="left:368.00px;top:1439.16px;font-size:19.3px;line-height:19.3px;color:#333;width:369px;overflow:hidden;text-overflow:ellipsis;"><span style="color:#3c8dbc">08. Qualité Image 3D RX</span></div><div class="r" style="left:740.00px;top:1437.00px;width:99.00px;height:26.40px;background:#00a65a;border-radius:4px;"></div><div class="t" style="left:740.00px;top:1443.18px;font-size:14.2px;line-height:14.2px;font-weight:700;color:#fff;width:99px;text-align:center;">01 Jan 2025</div><div class="t" style="left:368.00px;top:1469.16px;font-size:19.3px;line-height:19.3px;color:#333;width:369px;overflow:hidden;text-overflow:ellipsis;"><span style="color:#3c8dbc">09. Table de traitement</span></div><div class="r" style="left:740.00px;top:1467.00px;width:99.00px;height:26.40px;background:#00a65a;border-radius:4px;"></div><div class="t" style="left:740.00px;top:1473.18px;font-size:14.2px;line-height:14.2px;font-weight:700;color:#fff;width:99px;text-align:center;">01 Jan 2025</div><div class="t" style="left:368.00px;top:1499.16px;font-size:19.3px;line-height:19.3px;color:#333;width:369px;overflow:hidden;text-overflow:ellipsis;"><span style="color:#3c8dbc">10. Appareil isocentrique</span></div><div class="r" style="left:740.00px;top:1497.00px;width:99.00px;height:26.40px;background:#00a65a;border-radius:4px;"></div><div class="t" style="left:740.00px;top:1503.18px;font-size:14.2px;line-height:14.2px;font-weight:700;color:#fff;width:99px;text-align:center;">01 Jan 2025</div><div class="t" style="left:368.50px;top:1529.08px;font-size:19.1px;line-height:19.1px;font-weight:700;color:#333;">Annuel</div><div class="t" style="left:368.00px;top:1559.26px;font-size:19.3px;line-height:19.3px;color:#333;width:369px;overflow:hidden;text-overflow:ellipsis;"><span style="color:#3c8dbc">01. Dispositifs d'arrêt d'urgence</span></div><div class="r" style="left:740.00px;top:1557.10px;width:99.00px;height:26.40px;background:#00a65a;border-radius:4px;"></div><div class="t" style="left:740.00px;top:1563.28px;font-size:14.2px;line-height:14.2px;font-weight:700;color:#fff;width:99px;text-align:center;">01 Jan 2025</div><div class="t" style="left:368.00px;top:1589.29px;font-size:19.3px;line-height:19.3px;color:#333;width:369px;overflow:hidden;text-overflow:ellipsis;"><span style="color:#3c8dbc">02. Stabilité Indice de qualité</span></div><div class="r" style="left:740.00px;top:1587.13px;width:99.00px;height:26.40px;background:#00a65a;border-radius:4px;"></div><div class="t" style="left:740.00px;top:1593.31px;font-size:14.2px;line-height:14.2px;font-weight:700;color:#fff;width:99px;text-align:center;">01 Jan 2025</div><div class="t" style="left:368.00px;top:1619.32px;font-size:19.3px;line-height:19.3px;color:#333;width:369px;overflow:hidden;text-overflow:ellipsis;"><span style="color:#3c8dbc">03. Stabilité Profil de dose</span></div><div class="r" style="left:740.00px;top:1617.16px;width:99.00px;height:26.40px;background:#00a65a;border-radius:4px;"></div><div class="t" style="left:740.00px;top:1623.34px;font-size:14.2px;line-height:14.2px;font-weight:700;color:#fff;width:99px;text-align:center;">01 Jan 2025</div><div class="t" style="left:368.00px;top:1649.35px;font-size:19.3px;line-height:19.3px;color:#333;width:369px;overflow:hidden;text-overflow:ellipsis;"><span style="color:#3c8dbc">04. Contrôle du débit de dose</span></div><div class="r" style="left:740.00px;top:1647.19px;width:99.00px;height:26.40px;background:#00a65a;border-radius:4px;"></div><div class="t" style="left:740.00px;top:1653.37px;font-size:14.2px;line-height:14.2px;font-weight:700;color:#fff;width:99px;text-align:center;">01 Jan 2025</div><div class="t" style="left:368.00px;top:1679.38px;font-size:19.3px;line-height:19.3px;color:#333;width:369px;overflow:hidden;text-overflow:ellipsis;"><span style="color:#3c8dbc">05. Transmission Filtres</span></div><div class="r" style="left:740.00px;top:1677.22px;width:99.00px;height:26.40px;background:#00a65a;border-radius:4px;"></div><div class="t" style="left:740.00px;top:1683.40px;font-size:14.2px;line-height:14.2px;font-weight:700;color:#fff;width:99px;text-align:center;">01 Jan 2025</div><div class="t" style="left:368.00px;top:1709.41px;font-size:19.3px;line-height:19.3px;color:#333;width:369px;overflow:hidden;text-overflow:ellipsis;"><span style="color:#3c8dbc">06. Pénombres</span></div><div class="r" style="left:740.00px;top:1707.25px;width:99.00px;height:26.40px;background:#00a65a;border-radius:4px;"></div><div class="t" style="left:740.00px;top:1713.43px;font-size:14.2px;line-height:14.2px;font-weight:700;color:#fff;width:99px;text-align:center;">01 Jan 2025</div><div class="t" style="left:368.00px;top:1739.44px;font-size:19.3px;line-height:19.3px;color:#333;width:369px;overflow:hidden;text-overflow:ellipsis;"><span style="color:#3c8dbc">07. Caractérisation dosimétrique Source Ir192</span></div><div class="r" style="left:740.00px;top:1737.28px;width:99.00px;height:26.40px;background:#00a65a;border-radius:4px;"></div><div class="t" style="left:740.00px;top:1743.46px;font-size:14.2px;line-height:14.2px;font-weight:700;color:#fff;width:99px;text-align:center;">01 Jan 2025</div>
<div class="r" style="left:1049.00px;top:659.00px;width:651.00px;height:1119.00px;background:#fff;border-top:4px solid #d2d6de;box-shadow:0 1px 1px rgba(0,0,0,0.12);"></div><svg style="left:0;top:0" width="2414" height="720"><g transform="translate(1066.8,679.8)"><path d="M1.8 17.6 L12.8 23.6 V10.2 L1.8 5.6 Z" fill="#444"/><path d="M12.8 1.2 L23.9 5.6 V17.6 L12.8 23.6 L1.8 17.6 V5.6 Z M1.8 5.6 L12.8 10.2 L23.9 5.6 M12.8 10.2 V23.6" fill="none" stroke="#444" stroke-width="1.9" stroke-linejoin="round"/></g></svg><div class="t" style="left:1110.80px;top:680.68px;font-size:24px;line-height:24px;color:#444;letter-spacing:-0.9px;">TB2</div><div class="r" style="left:1653.00px;top:671.00px;width:32.00px;height:41.70px;background:#fff;border-radius:3px 3px 5px 5px;box-shadow:2px 3px 4px rgba(0,0,0,0.16);"></div><div class="r" style="left:1661.50px;top:689.00px;width:14.50px;height:4.00px;background:#97a0b3;border-radius:2px;"></div><div class="t" style="left:1064.50px;top:745.17px;font-size:18.7px;line-height:18.7px;font-weight:700;color:#333;">Test List</div><div class="t" style="left:1436.80px;top:744.83px;font-size:19.1px;line-height:19.1px;font-weight:700;color:#333;">Due Date</div><div class="t" style="left:1550.40px;top:745.26px;font-size:18.6px;line-height:18.6px;font-weight:700;color:#333;">Last QC Status</div><div class="t" style="left:1064.50px;top:774.83px;font-size:19.1px;line-height:19.1px;font-weight:700;color:#333;">Quotidien</div><div class="t" style="left:1064.00px;top:804.86px;font-size:19.3px;line-height:19.3px;color:#333;width:369px;overflow:hidden;text-overflow:ellipsis;"><span style="color:#3c8dbc">CQ Quotidien</span></div><div class="r" style="left:1436.00px;top:802.70px;width:97.50px;height:26.40px;background:#dd4b39;border-radius:4px;"></div><div class="t" style="left:1436.00px;top:808.88px;font-size:14.2px;line-height:14.2px;font-weight:700;color:#fff;width:97.5px;text-align:center;">02 Oct 2024</div><div class="r" style="left:1644.30px;top:802.00px;width:40.50px;height:27.20px;background:#00c0ef;border-radius:7px;"></div><div class="t" style="left:1644.30px;top:807.50px;font-size:15px;line-height:15px;font-weight:700;color:#fff;width:40.5px;text-align:center;">27</div><div class="t" style="left:1064.50px;top:835.03px;font-size:19.1px;line-height:19.1px;font-weight:700;color:#333;">Hebdomadaire</div><div class="t" style="left:1064.00px;top:865.46px;font-size:19.3px;line-height:19.3px;color:#333;width:369px;overflow:hidden;text-overflow:ellipsis;"><span style="color:#3c8dbc">CQ Hebdomadaire</span></div><div class="r" style="left:1436.00px;top:863.30px;width:99.00px;height:26.40px;background:#dd4b39;border-radius:4px;"></div><div class="t" style="left:1436.00px;top:869.48px;font-size:14.2px;line-height:14.2px;font-weight:700;color:#fff;width:99px;text-align:center;">01 Sep 2024</div><div class="t" style="left:1064.50px;top:895.23px;font-size:19.1px;line-height:19.1px;font-weight:700;color:#333;">Mensuel</div><div class="t" style="left:1064.00px;top:925.36px;font-size:19.3px;line-height:19.3px;color:#333;width:369px;overflow:hidden;text-overflow:ellipsis;"><span style="color:#3c8dbc">01. Sécurité</span></div><div class="r" style="left:1436.00px;top:923.20px;width:97.50px;height:26.40px;background:#dd4b39;border-radius:4px;"></div><div class="t" style="left:1436.00px;top:929.38px;font-size:14.2px;line-height:14.2px;font-weight:700;color:#fff;width:97.5px;text-align:center;">01 Oct 2024</div><div class="r" style="left:1654.30px;top:922.50px;width:30.50px;height:27.20px;background:#00c0ef;border-radius:7px;"></div><div class="t" style="left:1654.30px;top:928.00px;font-size:15px;line-height:15px;font-weight:700;color:#fff;width:30.5px;text-align:center;">8</div><div class="t" style="left:1064.00px;top:955.76px;font-size:19.3px;line-height:19.3px;color:#333;width:369px;overflow:hidden;text-overflow:ellipsis;"><span style="color:#3c8dbc">02. Indice de Qualité</span></div><div class="r" style="left:1436.00px;top:953.60px;width:97.50px;height:26.40px;background:#dd4b39;border-radius:4px;"></div><div class="t" style="left:1436.00px;top:959.78px;font-size:14.2px;line-height:14.2px;font-weight:700;color:#fff;width:97.5px;text-align:center;">01 Oct 2024</div><div class="r" style="left:1644.30px;top:952.90px;width:40.50px;height:27.20px;background:#00c0ef;border-radius:7px;"></div><div class="t" style="left:1644.30px;top:958.40px;font-size:15px;line-height:15px;font-weight:700;color:#fff;width:40.5px;text-align:center;">21</div><div class="t" style="left:1064.00px;top:986.16px;font-size:19.3px;line-height:19.3px;color:#333;width:369px;overflow:hidden;text-overflow:ellipsis;"><span style="color:#3c8dbc">03. Stabilité Profil de dose</span></div><div class="r" style="left:1436.00px;top:984.00px;width:97.50px;height:26.40px;background:#dd4b39;border-radius:4px;"></div><div class="t" style="left:1436.00px;top:990.18px;font-size:14.2px;line-height:14.2px;font-weight:700;color:#fff;width:97.5px;text-align:center;">01 Oct 2024</div><div class="r" style="left:1644.30px;top:983.30px;width:40.50px;height:27.20px;background:#00c0ef;border-radius:7px;"></div><div class="t" style="left:1644.30px;top:988.80px;font-size:15px;line-height:15px;font-weight:700;color:#fff;width:40.5px;text-align:center;">14</div><div class="t" style="left:1064.00px;top:1016.56px;font-size:19.3px;line-height:19.3px;color:#333;width:369px;overflow:hidden;text-overflow:ellipsis;"><span style="color:#3c8dbc">04. Test quantitatif RCMI Dynamique</span></div><div class="r" style="left:1436.00px;top:1014.40px;width:97.50px;height:26.40px;background:#dd4b39;border-radius:4px;"></div><div class="t" style="left:1436.00px;top:1020.58px;font-size:14.2px;line-height:14.2px;font-weight:700;color:#fff;width:97.5px;text-align:center;">01 Oct 2024</div><div class="r" style="left:1654.30px;top:1013.70px;width:30.50px;height:27.20px;background:#00a65a;border-radius:7px;"></div><div class="t" style="left:1654.30px;top:1019.20px;font-size:15px;line-height:15px;font-weight:700;color:#fff;width:30.5px;text-align:center;">2</div><div class="t" style="left:1064.00px;top:1046.96px;font-size:19.3px;line-height:19.3px;color:#333;width:369px;overflow:hidden;text-overflow:ellipsis;"><span style="color:#3c8dbc">05. Champ lumineux et lasers</span></div><div class="r" style="left:1436.00px;top:1044.80px;width:97.50px;height:26.40px;background:#dd4b39;border-radius:4px;"></div><div class="t" style="left:1436.00px;top:1050.98px;font-size:14.2px;line-height:14.2px;font-weight:700;color:#fff;width:97.5px;text-align:center;">01 Oct 2024</div><div class="r" style="left:1644.30px;top:1044.10px;width:40.50px;height:27.20px;background:#00a65a;border-radius:7px;"></div><div class="t" style="left:1644.30px;top:1049.60px;font-size:15px;line-height:15px;font-weight:700;color:#fff;width:40.5px;text-align:center;">25</div><div class="t" style="left:1064.00px;top:1077.36px;font-size:19.3px;line-height:19.3px;color:#333;width:369px;overflow:hidden;text-overflow:ellipsis;"><span style="color:#3c8dbc">06. Imageur EPID</span></div><div class="r" style="left:1436.00px;top:1075.20px;width:97.50px;height:26.40px;background:#dd4b39;border-radius:4px;"></div><div class="t" style="left:1436.00px;top:1081.38px;font-size:14.2px;line-height:14.2px;font-weight:700;color:#fff;width:97.5px;text-align:center;">01 Oct 2024</div><div class="r" style="left:1654.30px;top:1074.50px;width:30.50px;height:27.20px;background:#00a65a;border-radius:7px;"></div><div class="t" style="left:1654.30px;top:1080.00px;font-size:15px;line-height:15px;font-weight:700;color:#fff;width:30.5px;text-align:center;">1</div><div class="t" style="left:1064.00px;top:1107.76px;font-size:19.3px;line-height:19.3px;color:#333;width:369px;overflow:hidden;text-overflow:ellipsis;"><span style="color:#3c8dbc">07. Imageur OBI</span></div><div class="r" style="left:1436.00px;top:1105.60px;width:97.50px;height:26.40px;background:#dd4b39;border-radius:4px;"></div><div class="t" style="left:1436.00px;top:1111.78px;font-size:14.2px;line-height:14.2px;font-weight:700;color:#fff;width:97.5px;text-align:center;">01 Oct 2024</div><div class="r" style="left:1623.80px;top:1104.90px;width:30.50px;height:27.20px;background:#00a65a;border-radius:7px 0 0 7px;"></div><div class="t" style="left:1623.80px;top:1110.40px;font-size:15px;line-height:15px;font-weight:700;color:#fff;width:30.5px;text-align:center;">2</div><div class="r" style="left:1654.30px;top:1104.90px;width:30.50px;height:27.20px;background:#00c0ef;border-radius:0 7px 7px 0;"></div><div class="t" style="left:1654.30px;top:1110.40px;font-size:15px;line-height:15px;font-weight:700;color:#fff;width:30.5px;text-align:center;">1</div><div class="t" style="left:1064.00px;top:1138.16px;font-size:19.3px;line-height:19.3px;color:#333;width:369px;overflow:hidden;text-overflow:ellipsis;"><span style="color:#3c8dbc">08. Exactitude Commandes Table - Imagerie</span></div><div class="r" style="left:1436.00px;top:1136.00px;width:97.50px;height:26.40px;background:#dd4b39;border-radius:4px;"></div><div class="t" style="left:1436.00px;top:1142.18px;font-size:14.2px;line-height:14.2px;font-weight:700;color:#fff;width:97.5px;text-align:center;">01 Oct 2024</div><div class="r" style="left:1623.80px;top:1135.30px;width:30.50px;height:27.20px;background:#00a65a;border-radius:7px 0 0 7px;"></div><div class="t" style="left:1623.80px;top:1140.80px;font-size:15px;line-height:15px;font-weight:700;color:#fff;width:30.5px;text-align:center;">3</div><div class="r" style="left:1654.30px;top:1135.30px;width:30.50px;height:27.20px;background:#00c0ef;border-radius:0 7px 7px 0;"></div><div class="t" style="left:1654.30px;top:1140.80px;font-size:15px;line-height:15px;font-weight:700;color:#fff;width:30.5px;text-align:center;">6</div><div class="t" style="left:1064.00px;top:1168.56px;font-size:19.3px;line-height:19.3px;color:#333;width:369px;overflow:hidden;text-overflow:ellipsis;"><span style="color:#3c8dbc">09. Appareil Isocentrique</span></div><div class="r" style="left:1436.00px;top:1166.40px;width:97.50px;height:26.40px;background:#dd4b39;border-radius:4px;"></div><div class="t" style="left:1436.00px;top:1172.58px;font-size:14.2px;line-height:14.2px;font-weight:700;color:#fff;width:97.5px;text-align:center;">01 Oct 2024</div><div class="r" style="left:1654.30px;top:1165.70px;width:30.50px;height:27.20px;background:#00a65a;border-radius:7px;"></div><div class="t" style="left:1654.30px;top:1171.20px;font-size:15px;line-height:15px;font-weight:700;color:#fff;width:30.5px;text-align:center;">9</div><div class="t" style="left:1064.50px;top:1198.23px;font-size:19.1px;line-height:19.1px;font-weight:700;color:#333;">Semestriel</div><div class="t" style="left:1064.00px;top:1228.16px;font-size:19.3px;line-height:19.3px;color:#333;width:369px;overflow:hidden;text-overflow:ellipsis;"><span style="color:#3c8dbc">01. Sécurité Fixation des accessoires</span></div><div class="r" style="left:1436.00px;top:1226.00px;width:99.00px;height:26.40px;background:#00a65a;border-radius:4px;"></div><div class="t" style="left:1436.00px;top:1232.18px;font-size:14.2px;line-height:14.2px;font-weight:700;color:#fff;width:99px;text-align:center;">01 Jan 2025</div><div class="t" style="left:1064.00px;top:1258.16px;font-size:19.3px;line-height:19.3px;color:#333;width:369px;overflow:hidden;text-overflow:ellipsis;"><span style="color:#3c8dbc">02. Cohérence Moniteurs</span></div><div class="r" style="left:1436.00px;top:1256.00px;width:99.00px;height:26.40px;background:#00a65a;border-radius:4px;"></div><div class="t" style="left:1436.00px;top:1262.18px;font-size:14.2px;line-height:14.2px;font-weight:700;color:#fff;width:99px;text-align:center;">01 Jan 2025</div><div class="t" style="left:1064.00px;top:1288.16px;font-size:19.3px;line-height:19.3px;color:#333;width:369px;overflow:hidden;text-overflow:ellipsis;"><span style="color:#3c8dbc">03. répétabilité UM photon</span></div><div class="r" style="left:1436.00px;top:1286.00px;width:99.00px;height:26.40px;background:#00a65a;border-radius:4px;"></div><div class="t" style="left:1436.00px;top:1292.18px;font-size:14.2px;line-height:14.2px;font-weight:700;color:#fff;width:99px;text-align:center;">01 Jan 2025</div><div class="t" style="left:1064.00px;top:1318.16px;font-size:19.3px;line-height:19.3px;color:#333;width:369px;overflow:hidden;text-overflow:ellipsis;"><span style="color:#3c8dbc">04. Répétabilité UM électron</span></div><div class="r" style="left:1436.00px;top:1316.00px;width:99.00px;height:26.40px;background:#00a65a;border-radius:4px;"></div><div class="t" style="left:1436.00px;top:1322.18px;font-size:14.2px;line-height:14.2px;font-weight:700;color:#fff;width:99px;text-align:center;">01 Jan 2025</div><div class="t" style="left:1064.00px;top:1348.16px;font-size:19.3px;line-height:19.3px;color:#333;width:369px;overflow:hidden;text-overflow:ellipsis;"><span style="color:#3c8dbc">05. Linéarité UM</span></div><div class="r" style="left:1436.00px;top:1346.00px;width:99.00px;height:26.40px;background:#00a65a;border-radius:4px;"></div><div class="t" style="left:1436.00px;top:1352.18px;font-size:14.2px;line-height:14.2px;font-weight:700;color:#fff;width:99px;text-align:center;">01 Jan 2025</div><div class="t" style="left:1064.00px;top:1378.16px;font-size:19.3px;line-height:19.3px;color:#333;width:369px;overflow:hidden;text-overflow:ellipsis;"><span style="color:#3c8dbc">06. Exactitude Mâchoires</span></div><div class="r" style="left:1436.00px;top:1376.00px;width:99.00px;height:26.40px;background:#00a65a;border-radius:4px;"></div><div class="t" style="left:1436.00px;top:1382.18px;font-size:14.2px;line-height:14.2px;font-weight:700;color:#fff;width:99px;text-align:center;">01 Jan 2025</div><div class="t" style="left:1064.00px;top:1408.16px;font-size:19.3px;line-height:19.3px;color:#333;width:369px;overflow:hidden;text-overflow:ellipsis;"><span style="color:#3c8dbc">07. Qualité Image et Déplacement 2D RX</span></div><div class="r" style="left:1436.00px;top:1406.00px;width:99.00px;height:26.40px;background:#00a65a;border-radius:4px;"></div><div class="t" style="left:1436.00px;top:1412.18px;font-size:14.2px;line-height:14.2px;font-weight:700;color:#fff;width:99px;text-align:center;">01 Jan 2025</div><div class="t" style="left:1064.00px;top:1438.16px;font-size:19.3px;line-height:19.3px;color:#333;width:369px;overflow:hidden;text-overflow:ellipsis;"><span style="color:#3c8dbc">08. Qualité Image 3D RX</span></div><div class="r" style="left:1436.00px;top:1436.00px;width:99.00px;height:26.40px;background:#00a65a;border-radius:4px;"></div><div class="t" style="left:1436.00px;top:1442.18px;font-size:14.2px;line-height:14.2px;font-weight:700;color:#fff;width:99px;text-align:center;">01 Jan 2025</div><div class="t" style="left:1064.00px;top:1468.16px;font-size:19.3px;line-height:19.3px;color:#333;width:369px;overflow:hidden;text-overflow:ellipsis;"><span style="color:#3c8dbc">09. Table de traitement</span></div><div class="r" style="left:1436.00px;top:1466.00px;width:99.00px;height:26.40px;background:#00a65a;border-radius:4px;"></div><div class="t" style="left:1436.00px;top:1472.18px;font-size:14.2px;line-height:14.2px;font-weight:700;color:#fff;width:99px;text-align:center;">01 Jan 2025</div><div class="t" style="left:1064.00px;top:1498.16px;font-size:19.3px;line-height:19.3px;color:#333;width:369px;overflow:hidden;text-overflow:ellipsis;"><span style="color:#3c8dbc">10. Appareil isocentrique</span></div><div class="r" style="left:1436.00px;top:1496.00px;width:99.00px;height:26.40px;background:#00a65a;border-radius:4px;"></div><div class="t" style="left:1436.00px;top:1502.18px;font-size:14.2px;line-height:14.2px;font-weight:700;color:#fff;width:99px;text-align:center;">01 Jan 2025</div><div class="t" style="left:1064.50px;top:1528.08px;font-size:19.1px;line-height:19.1px;font-weight:700;color:#333;">Annuel</div><div class="t" style="left:1064.00px;top:1558.26px;font-size:19.3px;line-height:19.3px;color:#333;width:369px;overflow:hidden;text-overflow:ellipsis;"><span style="color:#3c8dbc">01. Dispositifs d'arrêt d'urgence</span></div><div class="r" style="left:1436.00px;top:1556.10px;width:99.00px;height:26.40px;background:#00a65a;border-radius:4px;"></div><div class="t" style="left:1436.00px;top:1562.28px;font-size:14.2px;line-height:14.2px;font-weight:700;color:#fff;width:99px;text-align:center;">01 Jan 2025</div><div class="t" style="left:1064.00px;top:1588.29px;font-size:19.3px;line-height:19.3px;color:#333;width:369px;overflow:hidden;text-overflow:ellipsis;"><span style="color:#3c8dbc">02. Stabilité Indice de qualité</span></div><div class="r" style="left:1436.00px;top:1586.13px;width:99.00px;height:26.40px;background:#00a65a;border-radius:4px;"></div><div class="t" style="left:1436.00px;top:1592.31px;font-size:14.2px;line-height:14.2px;font-weight:700;color:#fff;width:99px;text-align:center;">01 Jan 2025</div><div class="t" style="left:1064.00px;top:1618.32px;font-size:19.3px;line-height:19.3px;color:#333;width:369px;overflow:hidden;text-overflow:ellipsis;"><span style="color:#3c8dbc">03. Stabilité Profil de dose</span></div><div class="r" style="left:1436.00px;top:1616.16px;width:99.00px;height:26.40px;background:#00a65a;border-radius:4px;"></div><div class="t" style="left:1436.00px;top:1622.34px;font-size:14.2px;line-height:14.2px;font-weight:700;color:#fff;width:99px;text-align:center;">01 Jan 2025</div><div class="t" style="left:1064.00px;top:1648.35px;font-size:19.3px;line-height:19.3px;color:#333;width:369px;overflow:hidden;text-overflow:ellipsis;"><span style="color:#3c8dbc">04. Contrôle du débit de dose</span></div><div class="r" style="left:1436.00px;top:1646.19px;width:99.00px;height:26.40px;background:#00a65a;border-radius:4px;"></div><div class="t" style="left:1436.00px;top:1652.37px;font-size:14.2px;line-height:14.2px;font-weight:700;color:#fff;width:99px;text-align:center;">01 Jan 2025</div><div class="t" style="left:1064.00px;top:1678.38px;font-size:19.3px;line-height:19.3px;color:#333;width:369px;overflow:hidden;text-overflow:ellipsis;"><span style="color:#3c8dbc">05. Transmission Filtres</span></div><div class="r" style="left:1436.00px;top:1676.22px;width:99.00px;height:26.40px;background:#00a65a;border-radius:4px;"></div><div class="t" style="left:1436.00px;top:1682.40px;font-size:14.2px;line-height:14.2px;font-weight:700;color:#fff;width:99px;text-align:center;">01 Jan 2025</div><div class="t" style="left:1064.00px;top:1708.41px;font-size:19.3px;line-height:19.3px;color:#333;width:369px;overflow:hidden;text-overflow:ellipsis;"><span style="color:#3c8dbc">06. Pénombres</span></div><div class="r" style="left:1436.00px;top:1706.25px;width:99.00px;height:26.40px;background:#00a65a;border-radius:4px;"></div><div class="t" style="left:1436.00px;top:1712.43px;font-size:14.2px;line-height:14.2px;font-weight:700;color:#fff;width:99px;text-align:center;">01 Jan 2025</div><div class="t" style="left:1064.00px;top:1738.44px;font-size:19.3px;line-height:19.3px;color:#333;width:369px;overflow:hidden;text-overflow:ellipsis;"><span style="color:#3c8dbc">07. Caractérisation dosimétrique Source Ir192</span></div><div class="r" style="left:1436.00px;top:1736.28px;width:99.00px;height:26.40px;background:#00a65a;border-radius:4px;"></div><div class="t" style="left:1436.00px;top:1742.46px;font-size:14.2px;line-height:14.2px;font-weight:700;color:#fff;width:99px;text-align:center;">01 Jan 2025</div>
<div class="r" style="left:330.00px;top:1726.00px;width:2084.00px;height:80.00px;background:linear-gradient(to bottom,rgba(40,50,70,0) 0%,rgba(40,50,70,0.04) 40%,rgba(40,50,70,0.12) 100%);z-index:20"></div>
<svg style="left:0;top:0;z-index:30" width="2414" height="1806"><path d="M0 1794 A12 12 0 0 0 12 1806 H0 Z" fill="#10140a"/><path d="M2414 1801 A5 5 0 0 1 2409 1806 H2414 Z" fill="#2a2410"/></svg></body></html>
